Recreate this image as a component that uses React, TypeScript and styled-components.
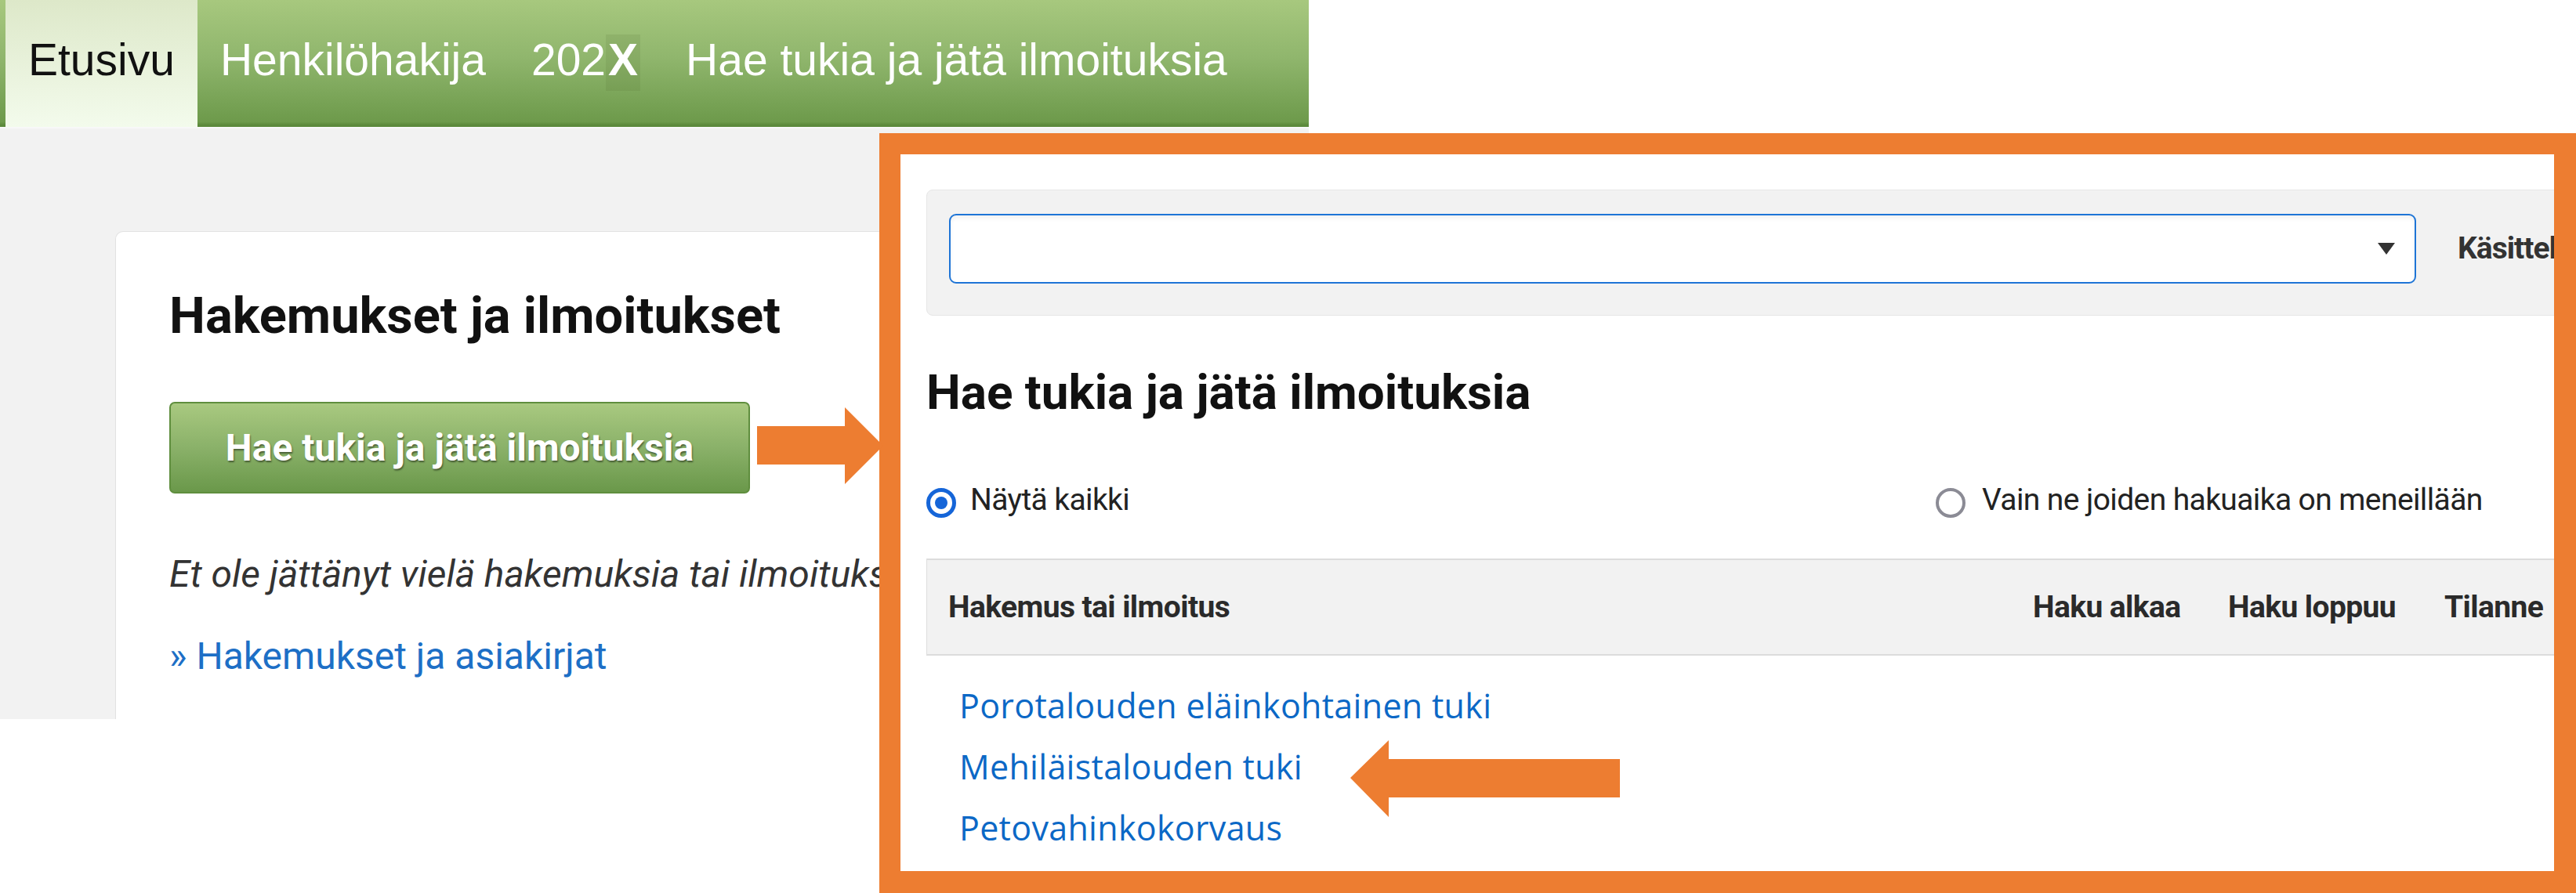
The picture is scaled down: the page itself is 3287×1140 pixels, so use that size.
import React from "react";
import styled, { createGlobalStyle } from "styled-components";

const Global = createGlobalStyle`
  html, body { margin: 0; padding: 0; background: #fff; }
  body { width: 3287px; height: 1140px; overflow: hidden; }
  * { box-sizing: border-box; }
`;

const ORANGE = "#ed7d31";

const Page = styled.div`
  position: relative;
  width: 3287px;
  height: 1140px;
  background: #fff;
  overflow: hidden;
`;

const Screenshot = styled.div`
  width: 1670px;
  height: 918px;
  background: #f2f2f2;
  overflow: hidden;
  display: flex;
  flex-direction: column;
`;

const NavBar = styled.nav`
  flex: none;
  height: 164px;
  display: flex;
  padding-left: 7px;
  background: linear-gradient(#a7c87e 0%, #90b66d 45%, #6d9a4b 96%, #5c8a3c 98.5%);
  border-bottom: 2px solid #f8f8f8;
`;

const NavItem = styled.a<{ $active?: boolean }>`
  display: block;
  padding: 44px 29px 0;
  font-family: "Liberation Sans", Arial, sans-serif;
  font-size: 57px;
  line-height: 65px;
  white-space: nowrap;
  text-decoration: none;
  color: ${(p) => (p.$active ? "#111" : "#fff")};
  background: ${(p) =>
    p.$active ? "linear-gradient(#dde8c9, #f3fbec)" : "transparent"};
`;

const Placeholder = styled.span`
  font-weight: 700;
  padding: 0 3px 8px;
  background: rgba(70, 100, 40, 0.12);
`;

const Main = styled.main`
  flex: 1;
  padding: 131px 0 0 147px;
`;

const Card = styled.section`
  height: calc(100% + 40px);
  background: #fff;
  border: 1.5px solid #e2e2e2;
  border-right: none;
  border-radius: 10px 0 0 0;
  padding: 69px 0 0 68px;
`;

const Heading = styled.h2<{ $size: number }>`
  margin: 0;
  font-family: Roboto, "Liberation Sans", sans-serif;
  font-weight: 700;
  font-size: ${(p) => p.$size}px;
  line-height: 76px;
  color: #111;
  white-space: nowrap;
`;

const PageHeading = styled(Heading)`
  margin-top: 60px;
`;

const PrimaryButton = styled.button`
  display: flex;
  align-items: center;
  justify-content: center;
  margin-top: 72px;
  width: 741px;
  height: 117px;
  border: 2px solid #5f8e3e;
  border-radius: 7px;
  background: linear-gradient(#a9c980, #8ab169 50%, #6a984a);
  color: #fff;
  font-family: Roboto, "Liberation Sans", sans-serif;
  font-weight: 700;
  font-size: 48px;
  text-shadow: 1px 2px 2px rgba(0, 0, 0, 0.45);
  cursor: pointer;
`;

const EmptyNote = styled.p`
  margin: 74px 0 0;
  font-family: Roboto, "Liberation Sans", sans-serif;
  font-style: italic;
  font-size: 48px;
  line-height: 58px;
  color: #333;
  white-space: nowrap;
`;

const MoreLink = styled.a`
  display: block;
  margin-top: 47px;
  font-family: Roboto, "Liberation Sans", sans-serif;
  font-size: 48px;
  line-height: 58px;
  color: #1d6fc6;
  text-decoration: none;
`;

const Callout = styled.div`
  position: absolute;
  left: 1122px;
  top: 170px;
  right: 0;
  bottom: 0;
  border: 27px solid ${ORANGE};
  border-right-width: 28px;
  border-bottom-width: 28px;
  background: #fff;
  overflow: hidden;
  padding: 45px 0 0 33px;
`;

const FilterBar = styled.div`
  display: flex;
  align-items: flex-start;
  width: 2200px;
  height: 161px;
  padding: 30px 0 0 28px;
  background: #f2f2f2;
  border: 1px solid #e6e6e6;
  border-radius: 8px;
`;

const SelectBox = styled.div`
  flex: none;
  display: flex;
  align-items: center;
  justify-content: flex-end;
  width: 1872px;
  height: 89px;
  padding-right: 25px;
  background: #fff;
  border: 2px solid #1e74d6;
  border-radius: 9px;
  box-shadow: inset 0 4px 5px rgba(0, 0, 0, 0.05);
`;

const Caret = styled.span`
  width: 0;
  height: 0;
  border-left: 11px solid transparent;
  border-right: 11px solid transparent;
  border-top: 15px solid #333;
`;

const FilterLabel = styled.span`
  margin-left: 53px;
  font-family: Roboto, "Liberation Sans", sans-serif;
  font-weight: 700;
  font-size: 39px;
  letter-spacing: -1px;
  line-height: 89px;
  color: #333;
  white-space: nowrap;
`;

const RadioRow = styled.div`
  margin-top: 74px;
  display: grid;
  grid-template-columns: 1288px auto;
  font-family: Roboto, "Liberation Sans", sans-serif;
  font-size: 39px;
  letter-spacing: -0.6px;
  line-height: 50px;
  color: #222;
`;

const RadioOption = styled.label<{ $gap: number }>`
  display: flex;
  align-items: center;
  gap: ${(p) => p.$gap}px;
  white-space: nowrap;
`;

const RadioMark = styled.span<{ $checked?: boolean }>`
  flex: none;
  position: relative;
  width: 38px;
  height: 38px;
  margin-top: 8px;
  border-radius: 50%;
  background: #fff;
  border: ${(p) => (p.$checked ? "5px solid #1565d8" : "4px solid #8b8b95")};
  &::after {
    content: "";
    display: ${(p) => (p.$checked ? "block" : "none")};
    position: absolute;
    left: 50%;
    top: 50%;
    width: 16px;
    height: 16px;
    margin: -8px 0 0 -8px;
    border-radius: 50%;
    background: #1565d8;
  }
`;

const TableHead = styled.div`
  margin-top: 50px;
  width: 2092px;
  height: 124px;
  display: grid;
  grid-template-columns: 1fr 249px 276px 187px;
  align-items: center;
  background: #f2f2f2;
  border-top: 2px solid #dcdcdc;
  border-bottom: 2px solid #dcdcdc;
  border-left: 1px solid #dedede;
  font-family: Roboto, "Liberation Sans", sans-serif;
  font-weight: 700;
  font-size: 39px;
  letter-spacing: -0.6px;
  color: #2a2a2a;
`;

const HeadCell = styled.div<{ $first?: boolean }>`
  padding-left: ${(p) => (p.$first ? 27 : 32)}px;
  white-space: nowrap;
`;

const LinkList = styled.ul`
  margin: 25px 0 0;
  padding: 0 0 0 42px;
  list-style: none;
  font-family: "Open Sans", "Noto Sans", sans-serif;
  font-size: 43px;
  letter-spacing: 0.3px;
  line-height: 78px;
`;

const ListLink = styled.a`
  color: #0b68c6;
  text-decoration: none;
  white-space: nowrap;
`;

const Arrow = styled.svg<{ $left: number; $top: number }>`
  position: absolute;
  left: ${(p) => p.$left}px;
  top: ${(p) => p.$top}px;
  overflow: visible;
`;

const columns = ["Haku alkaa", "Haku loppuu", "Tilanne"];
const links = [
  "Porotalouden eläinkohtainen tuki",
  "Mehiläistalouden tuki",
  "Petovahinkokorvaus",
];

export default function App() {
  return (
    <Page>
      <Global />
      <Screenshot>
        <NavBar>
          <NavItem $active>Etusivu</NavItem>
          <NavItem>Henkilöhakija</NavItem>
          <NavItem>
            202<Placeholder>X</Placeholder>
          </NavItem>
          <NavItem>Hae tukia ja jätä ilmoituksia</NavItem>
        </NavBar>
        <Main>
          <Card>
            <Heading $size={65}>Hakemukset ja ilmoitukset</Heading>
            <PrimaryButton>Hae tukia ja jätä ilmoituksia</PrimaryButton>
            <EmptyNote>
              Et ole jättänyt vielä hakemuksia tai ilmoituksia.
            </EmptyNote>
            <MoreLink href="#">» Hakemukset ja asiakirjat</MoreLink>
          </Card>
        </Main>
      </Screenshot>

      <Callout>
        <FilterBar>
          <SelectBox>
            <Caret />
          </SelectBox>
          <FilterLabel>Käsittelyn tila</FilterLabel>
        </FilterBar>
        <PageHeading $size={62}>Hae tukia ja jätä ilmoituksia</PageHeading>
        <RadioRow>
          <RadioOption $gap={18}>
            <RadioMark $checked />
            Näytä kaikki
          </RadioOption>
          <RadioOption $gap={21}>
            <RadioMark />
            Vain ne joiden hakuaika on meneillään
          </RadioOption>
        </RadioRow>
        <TableHead>
          <HeadCell $first>Hakemus tai ilmoitus</HeadCell>
          {columns.map((c) => (
            <HeadCell key={c}>{c}</HeadCell>
          ))}
        </TableHead>
        <LinkList>
          {links.map((l) => (
            <li key={l}>
              <ListLink href="#">{l}</ListLink>
            </li>
          ))}
        </LinkList>
      </Callout>

      <Arrow $left={966} $top={520} width={161} height={98} viewBox="0 0 161 98">
        <polygon
          points="0,24 112,24 112,0 161,49 112,98 112,73 0,73"
          fill={ORANGE}
        />
      </Arrow>
      <Arrow $left={1723} $top={945} width={344} height={98} viewBox="0 0 344 98">
        <polygon
          points="0,48 49,0 49,24 344,24 344,73 49,73 49,98"
          fill={ORANGE}
        />
      </Arrow>
    </Page>
  );
}
